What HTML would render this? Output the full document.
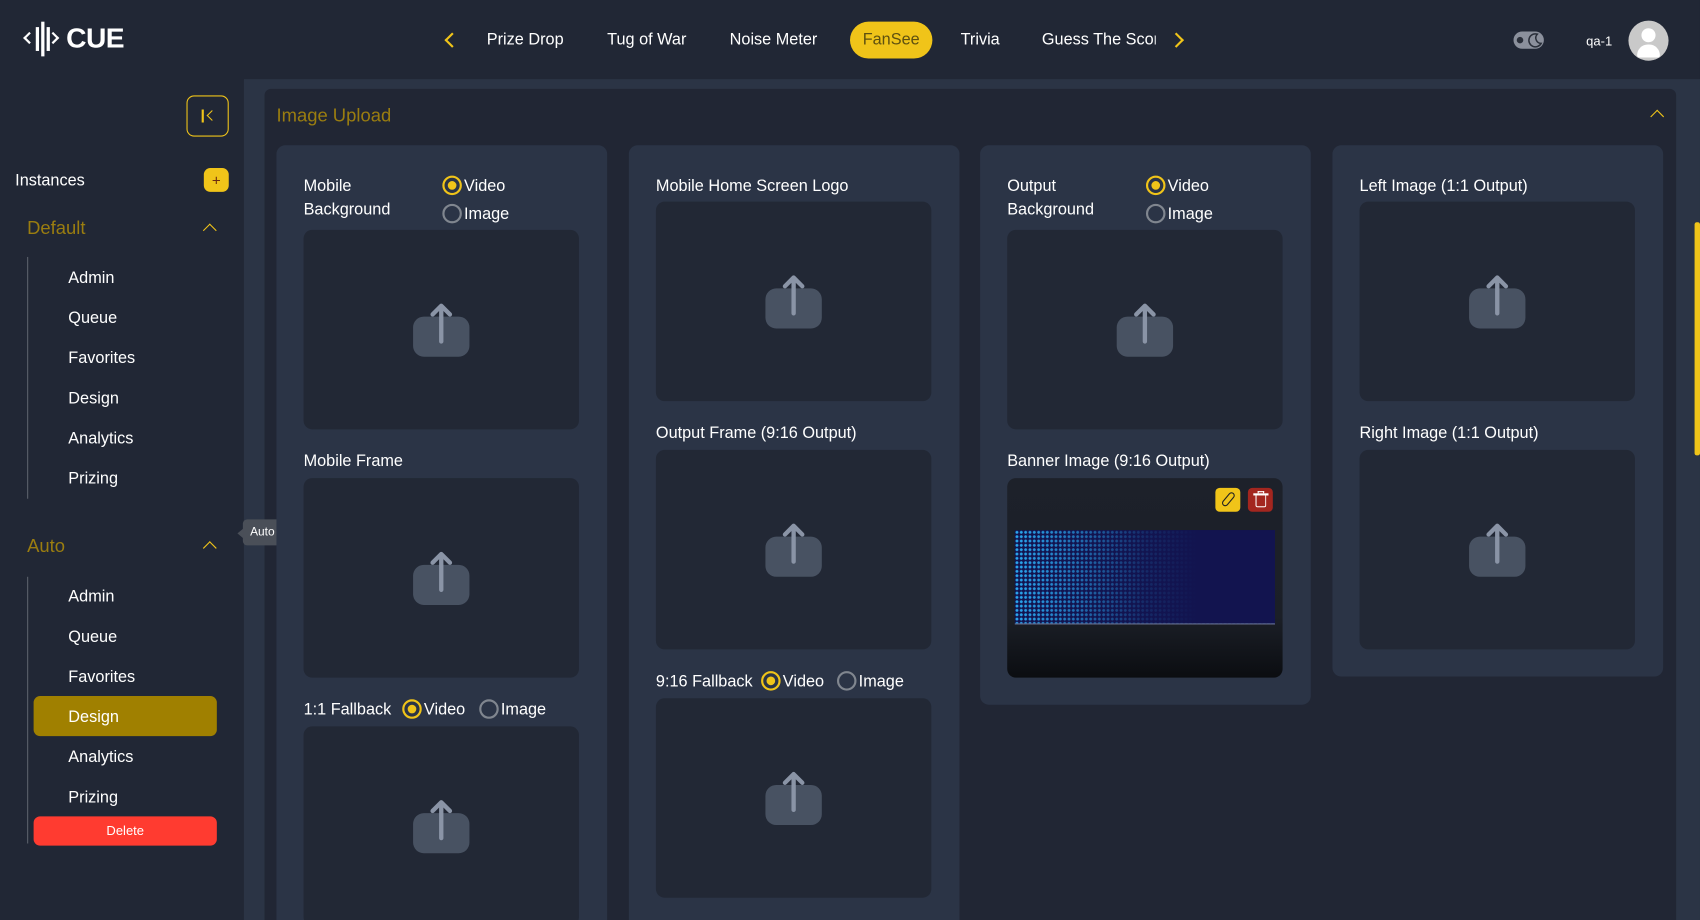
<!DOCTYPE html>
<html><head><meta charset="utf-8"><style>
*{box-sizing:border-box;margin:0;padding:0}
html,body{width:1700px;height:920px;overflow:hidden;background:#212735}
body{font-family:"Liberation Sans",sans-serif;color:#fff}
#w{position:absolute;left:0;top:0;width:1568px;height:849px;transform:scale(1.08418);transform-origin:0 0;background:#212735;overflow:hidden}
.a{position:absolute}
.t{position:absolute;font-size:15px;white-space:nowrap;color:#fff}
.nav{position:absolute;top:28px;font-size:15px;color:#fff;white-space:nowrap}
.side{font-size:15px;position:absolute;left:63px}
.gold{color:#9a7d10;font-size:17px}
.card{position:absolute;background:#2b3446;border-radius:8px}
.zone{position:absolute;width:254px;background:#222835;border-radius:8px}
.zone svg{position:absolute;left:0;top:0}
.rad{position:absolute;width:18px;height:18px;border-radius:50%;border:2px solid #80868f}
.rad.on{border:2px solid #f0c419}
.rad.on:after{content:"";position:absolute;left:3px;top:3px;width:8px;height:8px;border-radius:50%;background:#f0c419}
.chev{position:absolute;width:9px;height:9px;border-left:1.6px solid #f0c419;border-top:1.6px solid #f0c419;transform:rotate(45deg)}
</style></head><body><div id="w">
<!-- header logo -->
<div class="a" style="left:23px;top:31px;width:8px;height:8px;border-left:2.5px solid #fff;border-bottom:2.5px solid #fff;transform:rotate(45deg)"></div>
<div class="a" style="left:33px;top:25px;width:2.5px;height:22px;background:#fff"></div>
<div class="a" style="left:38px;top:20px;width:2.5px;height:32px;background:#fff"></div>
<div class="a" style="left:43px;top:25px;width:2.5px;height:22px;background:#fff"></div>
<div class="a" style="left:45px;top:31px;width:8px;height:8px;border-right:2.5px solid #fff;border-top:2.5px solid #fff;transform:rotate(45deg)"></div>
<div class="a" style="left:61px;top:20px;font-size:26px;font-weight:bold;letter-spacing:-0.5px">CUE</div>
<!-- nav -->
<div class="a" style="left:412px;top:32px;width:10px;height:10px;border-left:2px solid #f0c419;border-bottom:2px solid #f0c419;transform:rotate(45deg)"></div>
<div class="nav" style="left:449px">Prize Drop</div>
<div class="nav" style="left:560px">Tug of War</div>
<div class="nav" style="left:673px">Noise Meter</div>
<div class="a" style="left:784px;top:20px;width:76px;height:34px;border-radius:17px;background:#f0c419;color:#5e5010;font-size:15px;text-align:center;line-height:34px">FanSee</div>
<div class="nav" style="left:886px">Trivia</div>
<div class="nav" style="left:961px;width:105px;overflow:hidden">Guess The Score</div>
<div class="a" style="left:1080px;top:32px;width:10px;height:10px;border-right:2px solid #f0c419;border-top:2px solid #f0c419;transform:rotate(45deg)"></div>
<div class="a" style="left:1396px;top:29px;width:28px;height:16px;border-radius:8px;background:#8b909c"></div>
<div class="a" style="left:1399px;top:34px;width:6px;height:6px;border-radius:50%;background:#2a2f3a"></div>
<svg class="a" style="left:1408px;top:29px" width="16" height="16" viewBox="0 0 16 16"><path d="M10 2.5A6 6 0 1 0 13.5 11 5 5 0 0 1 10 2.5Z" fill="none" stroke="#2a2f3a" stroke-width="1.4"/></svg>
<div class="a" style="left:1463px;top:31px;font-size:12px">qa-1</div>
<div class="a" style="left:1502px;top:19px;width:37px;height:37px;border-radius:50%;background:#c9c9c9;overflow:hidden">
 <div class="a" style="left:12px;top:7px;width:13px;height:13px;border-radius:50%;background:#fff"></div>
 <div class="a" style="left:8px;top:22px;width:21px;height:12px;border-radius:10px 10px 2px 2px;background:#fff"></div>
</div>
<!-- sidebar -->
<div class="a" style="left:172px;top:88px;width:39px;height:38px;border:1px solid #f0c419;border-radius:7px"></div>
<div class="a" style="left:186px;top:101px;width:2px;height:12px;background:#f0c419"></div>
<div class="a" style="left:192px;top:103px;width:7px;height:7px;border-left:1.6px solid #f0c419;border-bottom:1.6px solid #f0c419;transform:rotate(45deg)"></div>
<div class="side" style="left:14px;top:158px">Instances</div>
<div class="a" style="left:188px;top:155px;width:23px;height:22px;border-radius:6px;background:#f0c419;color:#6a2a10;font-size:14px;text-align:center;line-height:22px">+</div>
<div class="a gold" style="left:25px;top:201px">Default</div>
<div class="chev" style="left:189px;top:208px"></div>
<div class="a" style="left:25px;top:237px;width:1px;height:223px;background:#5b606b"></div>
<div class="side" style="top:248px">Admin</div>
<div class="side" style="top:285px">Queue</div>
<div class="side" style="top:322px">Favorites</div>
<div class="side" style="top:359px">Design</div>
<div class="side" style="top:396px">Analytics</div>
<div class="side" style="top:433px">Prizing</div>
<div class="a gold" style="left:25px;top:494px">Auto</div>
<div class="chev" style="left:189px;top:501px"></div>
<div class="a" style="left:25px;top:532px;width:1px;height:246px;background:#5b606b"></div>
<div class="side" style="top:542px">Admin</div>
<div class="side" style="top:579px">Queue</div>
<div class="side" style="top:616px">Favorites</div>
<div class="a" style="left:31px;top:642px;width:169px;height:37px;border-radius:6px;background:#a08000"></div>
<div class="side" style="top:653px">Design</div>
<div class="side" style="top:690px">Analytics</div>
<div class="side" style="top:727px">Prizing</div>
<div class="a" style="left:31px;top:753px;width:169px;height:27px;border-radius:6px;background:#ff3b30;font-size:12px;text-align:center;line-height:27px">Delete</div>
<!-- content -->
<div class="a" style="left:225px;top:73px;width:1343px;height:776px;background:#2b3445"></div>
<div class="a" style="left:1563px;top:205px;width:5px;height:215px;background:#f0c419;border-radius:2px"></div>
<div class="a" style="left:244px;top:82px;width:1302px;height:767px;background:#212634;border-radius:6px 6px 0 0"></div>
<div class="a" style="left:224px;top:479px;width:36px;height:24px;border-radius:4px;background:#4a4f58;font-size:11px;text-align:center;line-height:24px">Auto</div>
<div class="a" style="left:219px;top:487px;width:0;height:0;border-top:5px solid transparent;border-bottom:5px solid transparent;border-right:6px solid #4a4f58"></div>
<div class="a gold" style="left:255px;top:97px">Image Upload</div>
<div class="chev" style="left:1524px;top:103px"></div>

<!-- col1 -->
<div class="card" style="left:255px;top:134px;width:305px;height:715px;border-radius:8px 8px 0 0">
 <div class="t" style="left:25px;top:27px;line-height:22px">Mobile<br>Background</div>
 <div class="rad on" style="left:153px;top:28px"></div><div class="t" style="left:173px;top:29px">Video</div>
 <div class="rad" style="left:153px;top:54px"></div><div class="t" style="left:173px;top:55px">Image</div>
 <div class="zone" style="left:25px;top:78px;height:184px"><svg width="254" height="184"><rect x="101" y="80" width="52" height="37" rx="10" fill="#485262"/><path d="M127 103V70M119 78L127 70L135 78" fill="none" stroke="#8a94a6" stroke-width="4" stroke-linecap="round" stroke-linejoin="round"/></svg></div>
 <div class="t" style="left:25px;top:283px">Mobile Frame</div>
 <div class="zone" style="left:25px;top:307px;height:184px"><svg width="254" height="184"><rect x="101" y="80" width="52" height="37" rx="10" fill="#485262"/><path d="M127 103V70M119 78L127 70L135 78" fill="none" stroke="#8a94a6" stroke-width="4" stroke-linecap="round" stroke-linejoin="round"/></svg></div>
 <div class="t" style="left:25px;top:512px">1:1 Fallback</div>
 <div class="rad on" style="left:116px;top:511px"></div><div class="t" style="left:136px;top:512px">Video</div>
 <div class="rad" style="left:187px;top:511px"></div><div class="t" style="left:207px;top:512px">Image</div>
 <div class="zone" style="left:25px;top:536px;height:184px"><svg width="254" height="184"><rect x="101" y="80" width="52" height="37" rx="10" fill="#485262"/><path d="M127 103V70M119 78L127 70L135 78" fill="none" stroke="#8a94a6" stroke-width="4" stroke-linecap="round" stroke-linejoin="round"/></svg></div>
</div>
<!-- col2 -->
<div class="card" style="left:580px;top:134px;width:305px;height:715px;border-radius:8px 8px 0 0">
 <div class="t" style="left:25px;top:29px">Mobile Home Screen Logo</div>
 <div class="zone" style="left:25px;top:52px;height:184px"><svg width="254" height="184"><rect x="101" y="80" width="52" height="37" rx="10" fill="#485262"/><path d="M127 103V70M119 78L127 70L135 78" fill="none" stroke="#8a94a6" stroke-width="4" stroke-linecap="round" stroke-linejoin="round"/></svg></div>
 <div class="t" style="left:25px;top:257px">Output Frame (9:16 Output)</div>
 <div class="zone" style="left:25px;top:281px;height:184px"><svg width="254" height="184"><rect x="101" y="80" width="52" height="37" rx="10" fill="#485262"/><path d="M127 103V70M119 78L127 70L135 78" fill="none" stroke="#8a94a6" stroke-width="4" stroke-linecap="round" stroke-linejoin="round"/></svg></div>
 <div class="t" style="left:25px;top:486px">9:16 Fallback</div>
 <div class="rad on" style="left:122px;top:485px"></div><div class="t" style="left:142px;top:486px">Video</div>
 <div class="rad" style="left:192px;top:485px"></div><div class="t" style="left:212px;top:486px">Image</div>
 <div class="zone" style="left:25px;top:510px;height:184px"><svg width="254" height="184"><rect x="101" y="80" width="52" height="37" rx="10" fill="#485262"/><path d="M127 103V70M119 78L127 70L135 78" fill="none" stroke="#8a94a6" stroke-width="4" stroke-linecap="round" stroke-linejoin="round"/></svg></div>
</div>
<!-- col3 -->
<div class="card" style="left:904px;top:134px;width:305px;height:516px">
 <div class="t" style="left:25px;top:27px;line-height:22px">Output<br>Background</div>
 <div class="rad on" style="left:153px;top:28px"></div><div class="t" style="left:173px;top:29px">Video</div>
 <div class="rad" style="left:153px;top:54px"></div><div class="t" style="left:173px;top:55px">Image</div>
 <div class="zone" style="left:25px;top:78px;height:184px"><svg width="254" height="184"><rect x="101" y="80" width="52" height="37" rx="10" fill="#485262"/><path d="M127 103V70M119 78L127 70L135 78" fill="none" stroke="#8a94a6" stroke-width="4" stroke-linecap="round" stroke-linejoin="round"/></svg></div>
 <div class="t" style="left:25px;top:283px">Banner Image (9:16 Output)</div>
 <div class="zone" style="left:25px;top:307px;height:184px;background:linear-gradient(#1d212a 0%,#1b1f27 70%,#0b0d11 100%);overflow:hidden">
  <div class="a" style="left:7px;top:48px;width:240px;height:87px;border-bottom:1px solid #6a7090;background:linear-gradient(90deg,rgba(18,20,80,0) 0%,rgba(18,20,80,.4) 25%,rgba(18,20,80,.85) 50%,#12144f 70%),radial-gradient(circle,#2aa8f0 1.1px,transparent 1.6px) 0 0/4px 4px,#12144f"></div>
  <div class="a" style="left:192px;top:9px;width:23px;height:22px;border-radius:4px;background:#f0c419"><div class="a" style="left:9px;top:3px;width:6px;height:15px;border:1.5px solid #222;border-radius:3px;transform:rotate(40deg)"></div></div>
  <div class="a" style="left:222px;top:9px;width:23px;height:22px;border-radius:4px;background:#a3261f"><div class="a" style="left:7px;top:7px;width:10px;height:11px;border:1.5px solid #fff;border-top:none;border-radius:0 0 2px 2px"></div><div class="a" style="left:5px;top:5px;width:14px;height:1.5px;background:#fff"></div><div class="a" style="left:9px;top:3px;width:6px;height:2px;border:1.2px solid #fff;border-bottom:none"></div></div>
 </div>
</div>
<!-- col4 -->
<div class="card" style="left:1229px;top:134px;width:305px;height:490px">
 <div class="t" style="left:25px;top:29px">Left Image (1:1 Output)</div>
 <div class="zone" style="left:25px;top:52px;height:184px"><svg width="254" height="184"><rect x="101" y="80" width="52" height="37" rx="10" fill="#485262"/><path d="M127 103V70M119 78L127 70L135 78" fill="none" stroke="#8a94a6" stroke-width="4" stroke-linecap="round" stroke-linejoin="round"/></svg></div>
 <div class="t" style="left:25px;top:257px">Right Image (1:1 Output)</div>
 <div class="zone" style="left:25px;top:281px;height:184px"><svg width="254" height="184"><rect x="101" y="80" width="52" height="37" rx="10" fill="#485262"/><path d="M127 103V70M119 78L127 70L135 78" fill="none" stroke="#8a94a6" stroke-width="4" stroke-linecap="round" stroke-linejoin="round"/></svg></div>
</div>
</div></body></html>
